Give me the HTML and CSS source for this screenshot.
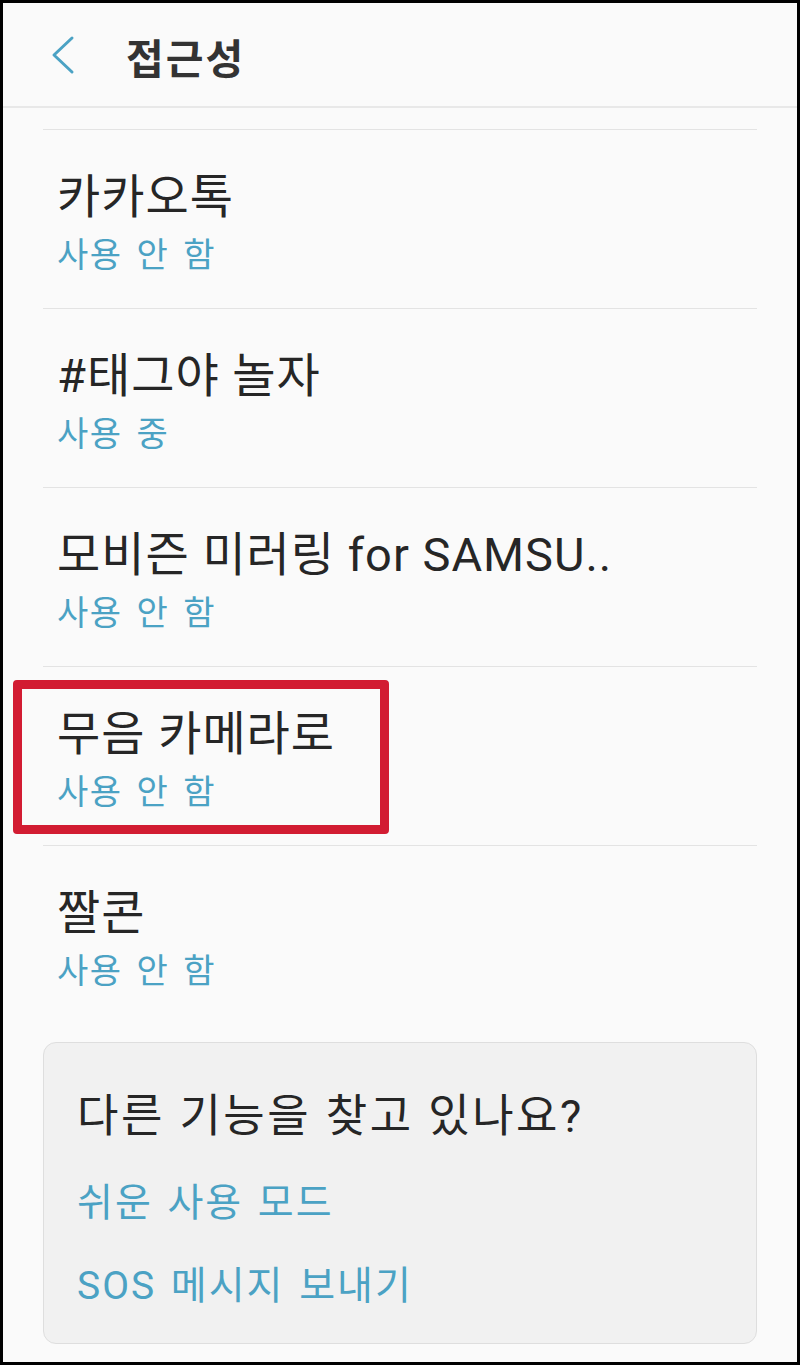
FILE: index.html
```html
<!DOCTYPE html>
<html lang="ko">
<head>
<meta charset="utf-8">
<title>접근성</title>
<link rel="stylesheet" href="styles.css">
</head>
<body>
<div class="screen">
  <header class="header">
    <svg class="back" width="24" height="42" viewBox="0 0 24 42" aria-hidden="true">
      <polyline points="21,4 3,21 21,38" fill="none" stroke="#4ba2c4" stroke-width="3" stroke-linecap="round" stroke-linejoin="round"/>
    </svg>
    <h1 class="title">접근성</h1>
  </header>
  <ul class="list">
    <li class="row">
      <div class="row-title">카카오톡</div>
      <div class="row-sub">사용 안 함</div>
    </li>
    <li class="row">
      <div class="row-title">#태그야 놀자</div>
      <div class="row-sub">사용 중</div>
    </li>
    <li class="row">
      <div class="row-title">모비즌 미러링 for SAMSU..</div>
      <div class="row-sub">사용 안 함</div>
    </li>
    <li class="row">
      <div class="row-title">무음 카메라로</div>
      <div class="row-sub">사용 안 함</div>
      <div class="highlight"></div>
    </li>
    <li class="row">
      <div class="row-title">짤콘</div>
      <div class="row-sub">사용 안 함</div>
    </li>
  </ul>
  <section class="more">
    <div class="more-title">다른 기능을 찾고 있나요?</div>
    <div class="more-link first">쉬운 사용 모드</div>
    <div class="more-link">SOS 메시지 보내기</div>
  </section>
</div>
</body>
</html>
```
FILE: styles.css
```css
html, body {
  margin: 0;
  padding: 0;
}
body {
  background: #000;
  width: 800px;
  height: 1365px;
  overflow: hidden;
  font-family: Roboto, "Noto Sans CJK KR", sans-serif;
}
.screen {
  margin: 3px 3px 0 3px;
  height: 1359px;
  background: #fafafa;
  overflow: hidden;
}
.header {
  box-sizing: border-box;
  height: 105px;
  padding: 31px 0 0 48px;
  display: flex;
  align-items: flex-start;
  border-bottom: 2px solid #e8e8e8;
}
.back {
  display: block;
  flex: none;
}
.title {
  margin: 1px 0 0 51px;
  font-size: 41px;
  line-height: 50px;
  font-weight: 700;
  letter-spacing: 2px;
  color: #333333;
}
.list {
  list-style: none;
  margin: 21px 40px 0 40px;
  padding: 0;
}
.row {
  position: relative;
  border-top: 1px solid #e3e3e3;
  padding: 39px 14px 31px 14px;
}
.row-title {
  font-size: 47px;
  line-height: 56px;
  letter-spacing: 1px;
  color: #262626;
  white-space: nowrap;
}
.row-sub {
  margin-top: 8px;
  font-size: 34px;
  line-height: 44px;
  letter-spacing: 1.5px;
  word-spacing: 4px;
  color: #4ba2c4;
}
.highlight {
  position: absolute;
  left: -30px;
  top: 13px;
  width: 376px;
  height: 154px;
  box-sizing: border-box;
  border: 9px solid #d21c32;
  border-radius: 4px;
}
.more {
  margin: 18px 40px 0 40px;
  height: 302px;
  box-sizing: border-box;
  padding: 47px 0 0 33px;
  background: #f1f1f1;
  border: 1px solid #dedede;
  border-radius: 13px;
}
.more-title {
  font-size: 45px;
  line-height: 54px;
  letter-spacing: 2.5px;
  word-spacing: 1px;
  color: #262626;
}
.more-link {
  margin-top: 33px;
  font-size: 39px;
  line-height: 50px;
  letter-spacing: 2px;
  word-spacing: 3px;
  color: #4ba2c4;
}
.more-link.first {
  margin-top: 34px;
}
```
